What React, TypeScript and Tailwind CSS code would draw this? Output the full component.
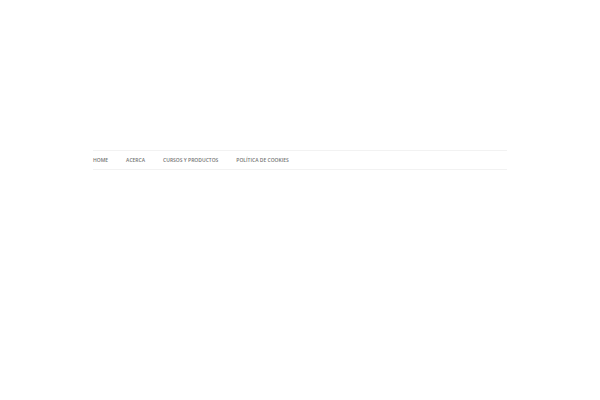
const links = [
  { label: 'Home', href: '#home' },
  { label: 'Acerca', href: '#acerca' },
  { label: 'Cursos y productos', href: '#cursos' },
  { label: 'Política de cookies', href: '#cookies' },
];

export default function App() {
  return (
    <div className="min-h-screen bg-white px-[93px] pt-[150px] font-['Open_Sans',sans-serif]">
      <header>
        <nav aria-label="Principal" className="border-y border-[#f2f2f2]">
          <ul className="flex gap-[18px]">
            {links.map((link) => (
              <li key={link.href}>
                <a
                  href={link.href}
                  className="block text-[5px] leading-[18px] font-semibold whitespace-nowrap text-[#757575] uppercase hover:text-black"
                >
                  {link.label}
                </a>
              </li>
            ))}
          </ul>
        </nav>
      </header>
    </div>
  );
}
